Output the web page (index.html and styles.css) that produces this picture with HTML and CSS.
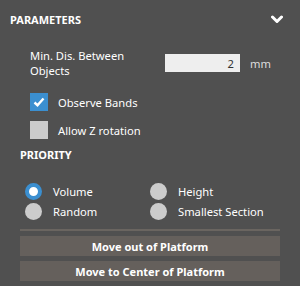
FILE: index.html
```html
<!DOCTYPE html>
<html lang="en">
  <head>
    <meta charset="UTF-8" />
    <title>Parameters</title>
    <link rel="stylesheet" href="styles.css">
  </head>
  <body>
    <div class="panel">
      <div class="panel-header">
        <span class="panel-title">PARAMETERS</span>
        <svg class="chevron" width="12" height="9" viewBox="0 0 12 9">
          <path d="M1.5 2 L6 6.5 L10.5 2" fill="none" stroke="#fff" stroke-width="3" stroke-linecap="round" stroke-linejoin="round" />
        </svg>
      </div>

      <div class="dist-row">
        <label class="dist-label">Min. Dis. Between Objects</label>
        <input class="dist-input" type="text" value="2">
        <span class="unit">mm</span>
      </div>

      <div class="check-row">
        <span class="checkbox checked">
          <svg width="12" height="10" viewBox="0 0 12 10">
            <path d="M1.5 5.5 L4.5 8.2 L10.5 1.5" fill="none" stroke="#fff" stroke-width="2.4" />
          </svg>
        </span>
        <span>Observe Bands</span>
      </div>
      <div class="check-row">
        <span class="checkbox"></span>
        <span>Allow Z rotation</span>
      </div>

      <div class="section-title">PRIORITY</div>
      <div class="radio-grid">
        <div class="radio-item"><span class="radio selected"></span>Volume</div>
        <div class="radio-item"><span class="radio"></span>Height</div>
        <div class="radio-item"><span class="radio"></span>Random</div>
        <div class="radio-item"><span class="radio"></span>Smallest Section</div>
      </div>

      <div class="separator"></div>
      <button class="action-btn">Move out of Platform</button>
      <button class="action-btn">Move to Center of Platform</button>
    </div>
  </body>
</html>
```

FILE: styles.css
```css
body {
  margin: 0;
  background-color: #505050;
  color: #fff;
  font-family: "Noto Sans", sans-serif;
  font-size: 11.2px;
}
.panel {
  padding: 10px 20px 0 20px;
}
.panel-header {
  display: flex;
  justify-content: space-between;
  align-items: center;
  margin-left: -10px;
  margin-right: -3px;
  height: 18px;
}
.panel-title {
  font-weight: bold;
  font-size: 11px;
}
.chevron {
  display: block;
}
.dist-row {
  display: flex;
  align-items: center;
  margin-top: 20px;
  padding-left: 10px;
}
.dist-label {
  width: 135px;
  line-height: 15px;
}
.dist-input {
  width: 75px;
  height: 18px;
  box-sizing: border-box;
  border: none;
  background-color: #eeeeee;
  color: #333;
  text-align: right;
  padding: 0 6px;
  font-family: "Noto Sans", sans-serif;
  font-size: 11.2px;
}
.unit {
  margin-left: 10px;
  color: #ddd;
}
.check-row {
  display: flex;
  align-items: center;
  gap: 10px;
  padding-left: 10px;
  margin-top: 15px;
  height: 18px;
}
.check-row + .check-row {
  margin-top: 10px;
}
.checkbox {
  width: 18px;
  height: 18px;
  background-color: #cccccc;
  display: flex;
  align-items: center;
  justify-content: center;
}
.checkbox.checked {
  background-color: #3b8fd0;
}
.section-title {
  font-weight: bold;
  font-size: 11px;
  line-height: 15px;
  margin-top: 8px;
}
.radio-grid {
  display: grid;
  grid-template-columns: 125px 1fr;
  margin-top: 20px;
  padding-left: 5px;
  row-gap: 2px;
}
.radio-item {
  display: flex;
  align-items: center;
  gap: 11px;
  height: 18px;
}
.radio {
  width: 17px;
  height: 17px;
  border-radius: 50%;
  background-color: #cccccc;
  box-sizing: border-box;
}
.radio.selected {
  background-color: #fff;
  border: 4px solid #3b8fd0;
}
.separator {
  height: 2px;
  background-color: #6a6560;
  margin-top: 9px;
}
.action-btn {
  display: block;
  width: 100%;
  height: 20px;
  margin-top: 5px;
  border: none;
  background-color: #65605c;
  color: #fff;
  font-family: "Noto Sans", sans-serif;
  font-weight: bold;
  font-size: 11px;
  padding: 0;
}
```
